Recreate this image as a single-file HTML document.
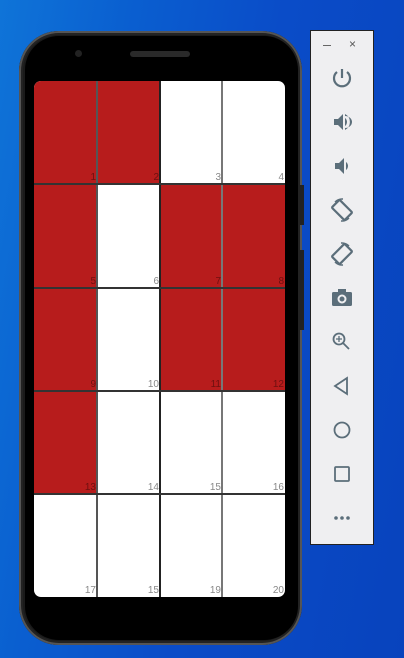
<!DOCTYPE html>
<html><head><style>
html,body{margin:0;padding:0;}
body{width:404px;height:658px;overflow:hidden;position:relative;
background:linear-gradient(100deg,#0f74d8 0%,#0a5fd0 25%,#0a4cc8 55%,#0843bd 100%);
font-family:"Liberation Sans",sans-serif;}
.phone{position:absolute;left:19px;top:31px;width:283px;height:614px;border-radius:40px;background:#1a1a1a;box-shadow:inset 0 0 0 2px #555,inset 0 0 0 4px #222;}
.inner{position:absolute;left:25px;top:36px;width:273px;height:604px;border-radius:34px;background:#000;}
.cam{position:absolute;left:75px;top:50px;width:7px;height:7px;border-radius:50%;background:#222;}
.spk{position:absolute;left:130px;top:51px;width:60px;height:6px;border-radius:3px;background:#2a2a2a;}
.btn{position:absolute;left:300px;width:4px;background:#222;}
.screen{position:absolute;left:34px;top:81px;width:251px;height:516px;background:#fff;border-radius:7px;overflow:hidden;}
.c{position:absolute;box-sizing:border-box;}
.r{background:#b71c1c;}
.n{position:absolute;right:1px;bottom:0px;font-size:10px;color:#888;line-height:12px;}
.r .n{color:#6e1010;}
.vl{position:absolute;top:0;width:2px;height:516px;background:#555;}
.hl{position:absolute;left:0;width:251px;height:1.5px;background:#333;}
.panel{position:absolute;left:310px;top:30px;width:62px;height:513px;background:#efeff1;border:1px solid #222;}
</style></head><body>
<div class="phone"></div>
<div class="inner"></div>
<div class="cam"></div><div class="spk"></div>
<div class="btn" style="top:185px;height:40px"></div>
<div class="btn" style="top:250px;height:80px"></div>
<div class="screen">
<div class="c r" style="left:0;top:0;width:63px;height:103px"><span class="n">1</span></div>
<div class="c r" style="left:63px;top:0;width:63px;height:103px"><span class="n">2</span></div>
<div class="c" style="left:126px;top:0;width:62px;height:103px"><span class="n">3</span></div>
<div class="c" style="left:188px;top:0;width:63px;height:103px"><span class="n">4</span></div>
<div class="c r" style="left:0;top:103px;width:63px;height:104px"><span class="n">5</span></div>
<div class="c" style="left:63px;top:103px;width:63px;height:104px"><span class="n">6</span></div>
<div class="c r" style="left:126px;top:103px;width:62px;height:104px"><span class="n">7</span></div>
<div class="c r" style="left:188px;top:103px;width:63px;height:104px"><span class="n">8</span></div>
<div class="c r" style="left:0;top:207px;width:63px;height:103px"><span class="n">9</span></div>
<div class="c" style="left:63px;top:207px;width:63px;height:103px"><span class="n">10</span></div>
<div class="c r" style="left:126px;top:207px;width:62px;height:103px"><span class="n">11</span></div>
<div class="c r" style="left:188px;top:207px;width:63px;height:103px"><span class="n">12</span></div>
<div class="c r" style="left:0;top:310px;width:63px;height:103px"><span class="n">13</span></div>
<div class="c" style="left:63px;top:310px;width:63px;height:103px"><span class="n">14</span></div>
<div class="c" style="left:126px;top:310px;width:62px;height:103px"><span class="n">15</span></div>
<div class="c" style="left:188px;top:310px;width:63px;height:103px"><span class="n">16</span></div>
<div class="c" style="left:0;top:413px;width:63px;height:103px"><span class="n">17</span></div>
<div class="c" style="left:63px;top:413px;width:63px;height:103px"><span class="n">15</span></div>
<div class="c" style="left:126px;top:413px;width:62px;height:103px"><span class="n">19</span></div>
<div class="c" style="left:188px;top:413px;width:63px;height:103px"><span class="n">20</span></div>
<div class="vl" style="left:62px;background:#555"></div>
<div class="vl" style="left:125px;background:#222"></div>
<div class="vl" style="left:187px;background:#777"></div>
<div class="hl" style="top:102px"></div>
<div class="hl" style="top:206px"></div>
<div class="hl" style="top:309px"></div>
<div class="hl" style="top:412px"></div>
</div>
<div class="panel">
<div style="position:absolute;left:12px;top:14px;width:8px;height:1px;background:#666"></div>
<div style="position:absolute;left:38px;top:6px;font-size:12px;color:#555">×</div>
<svg width="62" height="513" style="position:absolute;left:0;top:0" fill="none" stroke="#5b6e7a" stroke-width="2.2">
<g transform="translate(31,47)"><path d="M0-9V0"/><path d="M-5-6A8 8 0 1 0 5-6"/></g>
<g transform="translate(31,91)" fill="#5b6e7a" stroke="none"><path d="M-8-3h4l5-5v16l-5-5h-4z"/><path d="M3-4a5 5 0 0 1 0 8z"/><path d="M3-8v2a7 6 0 0 1 0 12v2a9 9 0 0 0 0-16z"/></g>
<g transform="translate(31,135)" fill="#5b6e7a" stroke="none"><path d="M-7-3h4l5-5v16l-5-5h-4z"/><path d="M4-4a5 5 0 0 1 0 8z"/></g>
<g transform="translate(31,179) rotate(-45)"><rect x="-5.5" y="-9" width="11" height="18" rx="1"/></g>
<path d="M24 171a10 10 0 0 1 8-3M38 187a10 10 0 0 1-8 3" stroke-width="1.5"/>
<g transform="translate(31,223) rotate(45)"><rect x="-5.5" y="-9" width="11" height="18" rx="1"/></g>
<path d="M30 212a10 10 0 0 1 8 3M32 234a10 10 0 0 1-8-3" stroke-width="1.5"/>
<g transform="translate(31,267)"><rect x="-10" y="-6" width="20" height="14" rx="1.5" fill="#5b6e7a" stroke="none"/><rect x="-4" y="-9" width="8" height="4" fill="#5b6e7a" stroke="none"/><circle cx="0" cy="1" r="3.5" stroke="#efeff1" stroke-width="2"/></g>
<g transform="translate(30,310)" stroke-width="1.8"><circle cx="-2" cy="-2" r="5.5"/><path d="M2 2l6 6"/><path d="M-2-5v6M-5-2h6" stroke-width="1.3"/></g>
<g transform="translate(31,355)" stroke-width="1.8"><path d="M5-8L-7 0L5 8Z"/></g>
<circle cx="31" cy="399" r="7.5" stroke-width="1.8"/>
<rect x="24" y="436" width="14" height="14" rx="1" stroke-width="1.8"/>
<g fill="#5b6e7a" stroke="none"><circle cx="25" cy="487" r="1.8"/><circle cx="31" cy="487" r="1.8"/><circle cx="37" cy="487" r="1.8"/></g>
</svg>
</div>
</body></html>
